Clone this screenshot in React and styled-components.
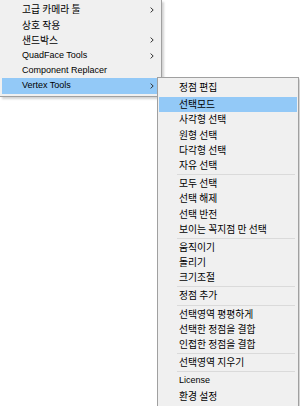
import React from "react";
import styled, { createGlobalStyle } from "styled-components";

const Global = createGlobalStyle`
  html, body { margin: 0; padding: 0; background: #ffffff; }
  body { font-family: "Liberation Sans", "Noto Sans CJK KR", sans-serif; }
`;

const Screen = styled.div`
  position: relative;
  width: 300px;
  height: 406px;
  overflow: hidden;
  background: #ffffff;
`;

const Menu = styled.div`
  box-sizing: border-box;
  display: flex;
  flex-direction: column;
  width: ${(p) => p.$width}px;
  background: #f0f0f0;
  padding: 2px 1px;
  border-right: 1px solid #a0a0a0;
  border-bottom: 1px solid #a0a0a0;
  box-shadow: 2px 2px 2px rgba(0, 0, 0, 0.18);
  font-family: "Liberation Sans", "Noto Sans CJK KR", sans-serif;
  color: #000;
`;

const RootMenu = styled(Menu)`
  padding-top: 2.4px;
  padding-left: 2px;
`;

const SubMenu = styled(Menu)`
  position: absolute;
  left: 157px;
  top: 77px;
  border: 1px solid #a0a0a0;
`;

const Item = styled.div`
  display: flex;
  align-items: center;
  justify-content: space-between;
  height: 15.2px;
  line-height: 15.2px;
  padding: 0 6px 0 20px;
  white-space: nowrap;
  background: ${(p) => (p.$active ? "#93c9f7" : "transparent")};
`;

const Label = styled.span`
  font-family: ${(p) =>
    p.$ko
      ? '"Noto Sans CJK KR", "Liberation Sans", sans-serif'
      : '"Liberation Sans", "Noto Sans CJK KR", sans-serif'};
  font-size: ${(p) => (p.$ko ? "9.8px" : "9px")};
  line-height: 15.2px;
`;

const Separator = styled.div`
  height: 1px;
  margin: ${(p) => (p.$hidden ? "0.5px" : "1px")} 2px
    ${(p) => (p.$hidden ? "0.5px" : "1px")} 18px;
  background: ${(p) => (p.$hidden ? "transparent" : "#dadada")};
`;

const Chevron = () => (
  <svg width="4" height="6" viewBox="0 0 4 6">
    <path d="M0.6 0.6 L3.2 3 L0.6 5.4" fill="none" stroke="#333" strokeWidth="1" />
  </svg>
);

const isKo = (s) => /[\uac00-\ud7a3]/.test(s);

const rootItems = [
  { label: "고급 카메라 툴", sub: true },
  { label: "상호 작용" },
  { label: "샌드박스", sub: true },
  { label: "QuadFace Tools", sub: true },
  { label: "Component Replacer" },
  { label: "Vertex Tools", sub: true, active: true },
];

const subItems = [
  "정점 편집",
  "-t",
  "선택모드",
  "사각형 선택",
  "원형 선택",
  "다각형 선택",
  "자유 선택",
  "-",
  "모두 선택",
  "선택 해제",
  "선택 반전",
  "보이는 꼭지점 만 선택",
  "-",
  "움직이기",
  "돌리기",
  "크기조절",
  "-",
  "정점 추가",
  "-",
  "선택영역 평평하게",
  "선택한 정점을 결합",
  "인접한 정점을 결합",
  "-",
  "선택영역 지우기",
  "-",
  "License",
  "환경 설정",
];

export default function App() {
  return (
    <>
      <Global />
      <Screen>
        <RootMenu $width={162}>
          {rootItems.map((it) => (
            <Item key={it.label} $active={it.active}>
              <Label $ko={isKo(it.label)}>{it.label}</Label>
              {it.sub && <Chevron />}
            </Item>
          ))}
        </RootMenu>
        <SubMenu $width={142}>
          {subItems.map((label, i) =>
            label.startsWith("-") ? (
              <Separator key={i} $hidden={label === "-t"} />
            ) : (
              <Item key={i} $active={label === "선택모드"}>
                <Label $ko={isKo(label)}>{label}</Label>
              </Item>
            )
          )}
        </SubMenu>
      </Screen>
    </>
  );
}
